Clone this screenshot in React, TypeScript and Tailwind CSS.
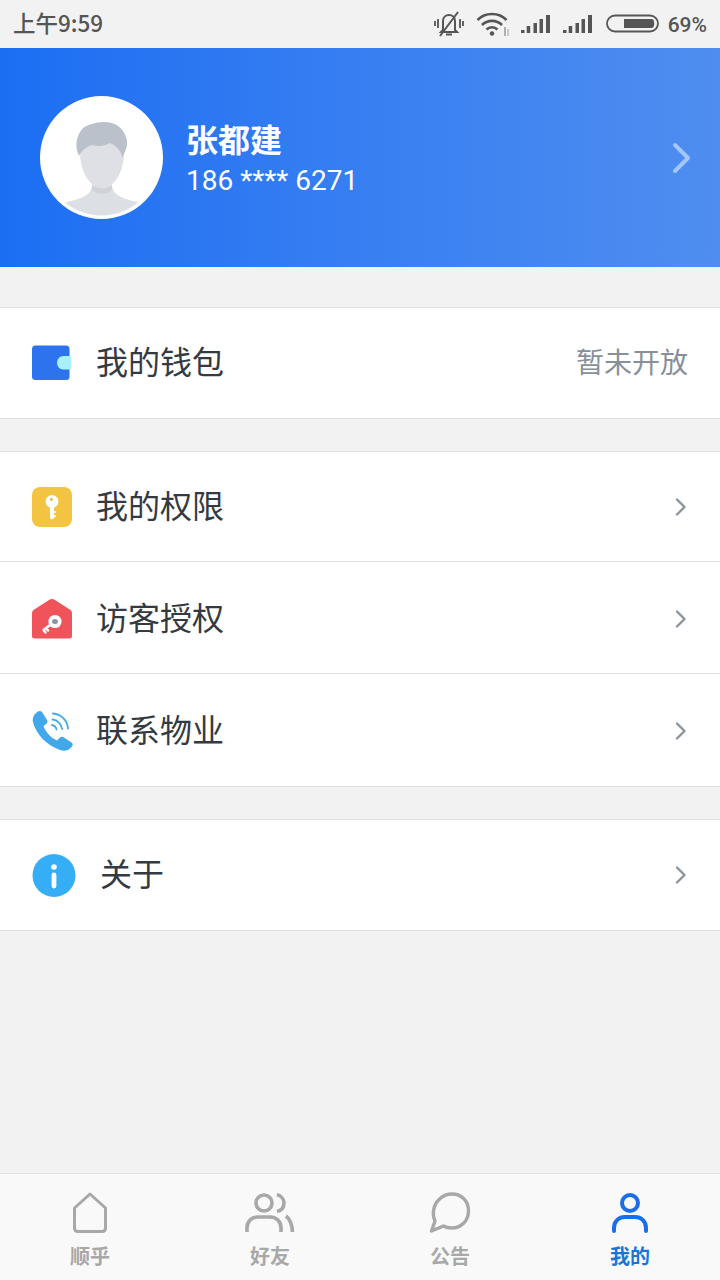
import React from "react";

function Chevron() {
  return (
    <svg width="14" height="20" viewBox="0 0 14 20" fill="none" className="shrink-0">
      <path d="M3 2.5 L10.5 10 L3 17.5" stroke="#8a949e" strokeWidth="2.4" strokeLinecap="round" strokeLinejoin="round" />
    </svg>
  );
}

function Wallet() {
  return (
    <svg width="44" height="36" viewBox="0 0 44 36">
      <rect x="0" y="0.5" width="37.5" height="34.5" rx="3.5" fill="#2d73ee" />
      <path d="M31 11 H39 V24.5 H31 A6 6.7 0 0 1 31 11 Z" fill="#a9f0fb" />
    </svg>
  );
}

function KeyIcon() {
  return (
    <svg width="40" height="40" viewBox="0 0 40 40">
      <rect width="40" height="40" rx="8" fill="#f3c441" />
      <circle cx="20" cy="14.5" r="6.5" fill="#fff" />
      <circle cx="19.5" cy="12.5" r="1.4" fill="#e5b53a" />
      <path d="M18 19 H22 V31 Q20 33.5 18 31 Z M22 24 H24 V26 H22 Z M22 28 H24 V30 H22 Z" fill="#fff" />
    </svg>
  );
}

function HouseKey() {
  return (
    <svg width="40" height="40" viewBox="0 0 40 40">
      <path d="M20 0 Q21.5 0 23 1 L38.5 11 Q40 12 40 14 V37 Q40 39.5 37.5 39.5 H2.5 Q0 39.5 0 37 V14 Q0 12 1.5 11 L17 1 Q18.5 0 20 0 Z" fill="#f0535a" />
      <circle cx="23" cy="22.5" r="6.6" fill="#fff" />
      <ellipse cx="23" cy="22.5" rx="3" ry="2.5" fill="#8a93a8" />
      <path d="M18 26 L11.5 31 M14 29 L16 31.5 M11.5 31 L13.5 33.5" stroke="#fff" strokeWidth="2.4" strokeLinecap="round" />
    </svg>
  );
}

function Phone() {
  return (
    <svg width="42" height="42" viewBox="0 0 42 42" fill="none">
      <path d="M6 1.5 C7.5 0.5 9 1 10 2 L15 10 C16 12 15 13.5 13.5 14.5 L11.5 16 C13 21 19 28 25 30.5 L27.5 28 C29 26.5 30.5 26.5 32 27.5 L39.5 32.5 C41 33.5 41 35 40 36.5 C37 40.5 33 41.5 28 40 C14 35 4 24 1 12 C0 8 2 4 6 1.5 Z" fill="#43a8ea" />
      <path d="M20 15 C22.5 15.5 24 17 24.5 19.5" stroke="#43a8ea" strokeWidth="1.8" strokeLinecap="round" />
      <path d="M20.5 9.5 C25.5 10 29.5 14 30 19" stroke="#43a8ea" strokeWidth="1.8" strokeLinecap="round" />
      <path d="M21 3.5 C29 4 35.5 10.5 36 18.5" stroke="#43a8ea" strokeWidth="1.8" strokeLinecap="round" />
    </svg>
  );
}

function Info() {
  return (
    <svg width="44" height="44" viewBox="0 0 44 44">
      <circle cx="22" cy="22.5" r="21.5" fill="#35aef5" />
      <circle cx="22" cy="14" r="2.8" fill="#fff" />
      <rect x="19.6" y="19.5" width="4.8" height="16" rx="2.4" fill="#fff" />
    </svg>
  );
}

function Avatar() {
  return (
    <div className="w-[123px] h-[123px] rounded-full bg-white overflow-hidden shrink-0">
      <svg width="123" height="123" viewBox="0 0 123 123">
        <defs>
          <clipPath id="inner">
            <circle cx="61.5" cy="61.5" r="58" />
          </clipPath>
        </defs>
        <g clipPath="url(#inner)">
          <path d="M22 108 C34 103 50 103 52 90 L72 90 C74 103 90 103 102 108 L102 125 H22 Z" fill="#dcdfe4" />
        </g>
        <path d="M52 88 C56 94 68 94 72 88 L72 94 C66 99 58 99 52 94 Z" fill="#cfd2d8" />
        <path d="M40 56 C40 44 50 38 62 38 C74 38 84 44 84 56 C84 76 74 92 62 92 C50 92 40 76 40 56 Z" fill="#dee0e5" />
        <path d="M39 60 C35 52 36 42 40 36 C43 31 47 29 52 28 C60 25 72 25 78 30 C85 35 88 44 87 50 C86 54 84 58 82 62 C82 56 77 50 70 47 C65 50 58 51 52 49 C46 51 41 55 39 60 Z" fill="#bbc1ca" />
      </svg>
    </div>
  );
}

function Row({
  icon,
  label,
  right,
  labelClass,
  heightClass,
}: {
  icon: React.ReactNode;
  label: string;
  right?: React.ReactNode;
  labelClass?: string;
  heightClass?: string;
}) {
  return (
    <div className={"flex items-center bg-white pl-8 pr-8 " + (heightClass ?? "h-[112px] pt-[2px]")}>
      <div className="w-[44px] h-[44px] flex items-center justify-start shrink-0">{icon}</div>
      <span className={"text-[32px] leading-[44px] pb-[6px] text-[#333a42] " + (labelClass ?? "ml-[20px]")}>{label}</span>
      <div className="ml-auto flex items-center">{right ?? <Chevron />}</div>
    </div>
  );
}

function Tab({ icon, label, active }: { icon: React.ReactNode; label: string; active?: boolean }) {
  return (
    <div className="flex-1 flex flex-col items-center pt-[17px]">
      <div className="h-[44px] flex items-center justify-center">{icon}</div>
      <span className={"mt-[7px] text-[20px] leading-[28px] font-bold " + (active ? "text-[#1a75d8]" : "text-[#a8a8a8]")}>{label}</span>
    </div>
  );
}

function Signal({ className }: { className: string }) {
  return (
    <svg width="30" height="22" viewBox="0 0 30 22" fill="#555" className={className}>
      <rect x="0" y="17" width="3.5" height="3" />
      <rect x="5.7" y="13" width="3.5" height="7" />
      <rect x="12.5" y="10" width="3.5" height="10" />
      <rect x="18.5" y="6" width="3.5" height="14" />
      <rect x="25" y="2" width="4" height="18" />
    </svg>
  );
}

export default function App() {
  return (
    <div
      className="w-[720px] h-[1280px] bg-[#f2f2f2] flex flex-col overflow-hidden"
      style={{ fontFamily: '"Noto Sans CJK SC", Roboto, sans-serif' }}
    >
      <div className="h-[48px] shrink-0 flex items-center justify-between pl-[13px] pr-[13px] text-[#555] bg-[#f2f2f2]">
        <span className="text-[22.5px] font-medium leading-[48px] pb-[4px]">上午9:59</span>
        <div className="flex items-center">
          <svg width="30" height="26" viewBox="0 0 30 26" fill="none" stroke="#555" strokeWidth="2">
            <path d="M9 19 V10 C9 6 12 4 15 4 C18 4 21 6 21 10 V19 L23 21 H7 Z" />
            <path d="M12 23.5 H18" />
            <path d="M24 1 L6 25" />
            <path d="M4 8 V17 M1 10 V15 M26 8 V17 M29 10 V15" strokeWidth="1.8" />
          </svg>
          <svg width="34" height="26" viewBox="0 0 34 26" fill="none" stroke="#555" strokeWidth="2.6" className="ml-[12px]">
            <path d="M1.5 9 C9 1 23 1 30.5 9" />
            <path d="M6 14 C11.5 8.5 20.5 8.5 26 14" />
            <path d="M10.5 18.5 C13.5 15.5 18.5 15.5 21.5 18.5" />
            <circle cx="16" cy="22.5" r="2.2" fill="#555" stroke="none" />
            <path d="M29 16 V25" strokeWidth="1.5" stroke="#999" />
            <path d="M32 18 V25" strokeWidth="1.5" stroke="#bbb" />
          </svg>
          <Signal className="ml-[11px]" />
          <Signal className="ml-[12px]" />
          <svg width="54" height="20" viewBox="0 0 54 20" fill="none" className="ml-[13px]">
            <rect x="1" y="1.5" width="51" height="16" rx="8" stroke="#555" strokeWidth="1.8" />
            <path d="M18 5 H46 C49 5 49 14 46 14 H18 Z" fill="#555" />
          </svg>
          <span className="ml-[8px] pt-[2px] text-[21px] font-medium leading-[48px]" style={{ fontFamily: "Roboto, sans-serif" }}>69%</span>
        </div>
      </div>

      <div className="h-[219px] shrink-0 flex items-center pl-[40px] pr-[28px] bg-gradient-to-r from-[#1b6ef3] to-[#4f8ef0]">
        <Avatar />
        <div className="ml-[23px] pt-[3px] flex flex-col">
          <span className="text-[32px] font-bold leading-[40px] text-white">张都建</span>
          <span className="mt-[3px] text-[28px] leading-[40px] text-white" style={{ fontFamily: "Roboto, sans-serif" }}>186 **** 6271</span>
        </div>
        <svg width="22" height="32" viewBox="0 0 22 32" fill="none" className="ml-auto">
          <path d="M5 3 L18 16 L5 29" stroke="#a5c6f8" strokeWidth="4" strokeLinecap="round" strokeLinejoin="round" />
        </svg>
      </div>

      <div className="mt-[40px] border-y border-[#e0e0e0]">
        <Row heightClass="h-[110px]" icon={<Wallet />} label="我的钱包" right={<span className="text-[28px] leading-[40px] pb-[4px] text-[#87909a]">暂未开放</span>} />
      </div>

      <div className="mt-[32px] border-y border-[#e0e0e0] divide-y divide-[#e0e0e0]">
        <Row heightClass="h-[110px]" icon={<KeyIcon />} label="我的权限" />
        <Row icon={<HouseKey />} label="访客授权" />
        <Row icon={<Phone />} label="联系物业" />
      </div>

      <div className="mt-[32px] border-y border-[#e0e0e0]">
        <Row heightClass="h-[110px]" icon={<Info />} label="关于" labelClass="ml-[24px]" />
      </div>

      <div className="mt-auto h-[107px] shrink-0 bg-[#f9f9f9] border-t border-[#e0e0e0] flex">
        <Tab
          label="顺乎"
          icon={
            <svg width="40" height="42" viewBox="0 0 40 42" fill="none" stroke="#a8a8a8" strokeWidth="3" strokeLinejoin="round">
              <path d="M20 2 L35.5 16 V36 Q35.5 39.5 32 39.5 H8 Q4.5 39.5 4.5 36 V16 Z" />
            </svg>
          }
        />
        <Tab
          label="好友"
          icon={
            <svg width="50" height="42" viewBox="0 0 50 42" fill="none" stroke="#a8a8a8" strokeWidth="3.6">
              <circle cx="19" cy="11" r="8" />
              <path d="M32 2.5 C37 4 39 8 39 11 C39 15 36.5 18.5 32 19.5" />
              <path d="M2 40 V36 C2 29 7 25 13 25 H25 C31 25 36 29 36 36 V40" />
              <path d="M41 24 C45 27 47 31 47.5 40" />
            </svg>
          }
        />
        <Tab
          label="公告"
          icon={
            <svg width="42" height="42" viewBox="0 0 42 42" fill="none" stroke="#a8a8a8" strokeWidth="3.4" strokeLinejoin="round">
              <path d="M23 2 C33 2 39.5 9.5 39.5 19 C39.5 29 32 36 22.5 36 C19.5 36 17 35.5 14.5 34 L2.5 39 L6 29 C4.5 26 4 23 4.5 19 C5.5 9.5 13.5 2 23 2 Z" />
            </svg>
          }
        />
        <Tab
          active
          label="我的"
          icon={
            <svg width="38" height="42" viewBox="0 0 38 42" fill="none" stroke="#1a6fe8" strokeWidth="4" strokeLinecap="round">
              <circle cx="19" cy="11" r="8" />
              <path d="M3 39 V36 C3 29 8 25 14 25 H24 C30 25 35 29 35 36 V39" />
            </svg>
          }
        />
      </div>
    </div>
  );
}
